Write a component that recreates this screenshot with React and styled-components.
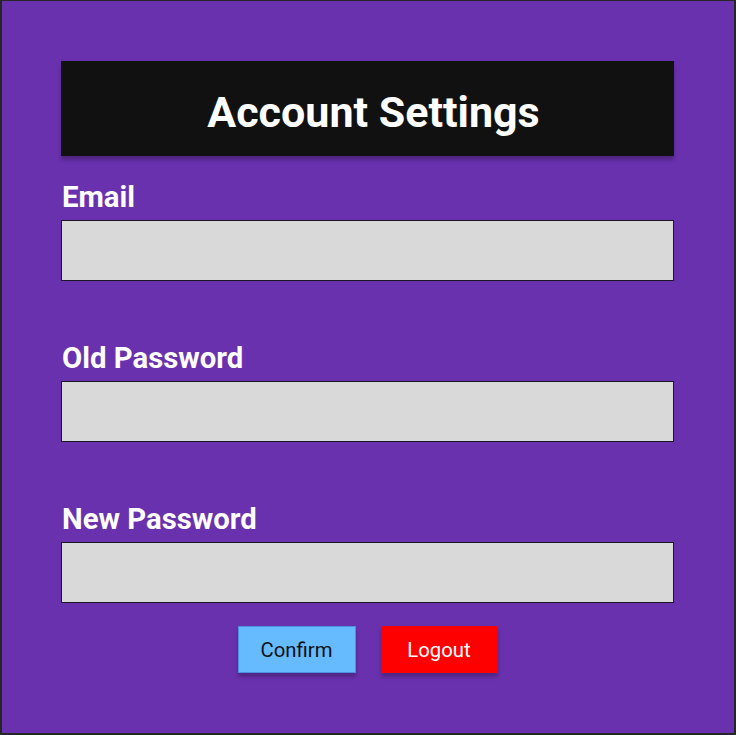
import React from "react";
import styled, { createGlobalStyle } from "styled-components";

const GlobalStyle = createGlobalStyle`
    html, body {
        margin: 0;
        padding: 0;
        background: #2b2b2b;
    }
    * {
        box-sizing: border-box;
    }
`;

const Page = styled.div`
    width: 736px;
    height: 735px;
    background: #6a31ae;
    border: 2px solid #262626;
    border-top-width: 1px;
    padding: 60px 60px 0 59px;
    font-family: Roboto, "Liberation Sans", sans-serif;
    display: flex;
    flex-direction: column;
`;

const Header = styled.div`
    height: 95px;
    padding-top: 8px;
    background: #111111;
    box-shadow: 0 4px 4px rgba(0, 0, 0, 0.25);
    display: flex;
    align-items: center;
    justify-content: center;

    h1 {
        margin: 0 0 0 12px;
        color: #ffffff;
        font-size: 43px;
        font-weight: 700;
        line-height: 1;
    }
`;

const Form = styled.form`
    margin-top: 25px;
    display: flex;
    flex-direction: column;
    gap: 61px;
`;

const Field = styled.div`
    display: flex;
    flex-direction: column;
    gap: 7px;
`;

const Label = styled.label`
    color: #ffffff;
    font-size: 29.3px;
    font-weight: 700;
    line-height: 32px;
    padding-left: 1px;
`;

const Input = styled.input`
    height: 61px;
    width: 100%;
    margin: 0;
    background: #d9d9d9;
    border: 1px solid #1a1626;
    outline: none;
    font-family: inherit;
    font-size: 20px;
    padding: 0 12px;
`;

const Buttons = styled.div`
    margin-top: 23px;
    display: flex;
    justify-content: center;
    gap: 25px;
`;

const Button = styled.button`
    width: ${(p) => p.width}px;
    height: 47px;
    margin: 0;
    border: 1px solid ${(p) => p.edge};
    background: ${(p) => p.bg};
    color: ${(p) => p.fg};
    font-family: inherit;
    font-size: 20.3px;
    font-weight: 400;
    box-shadow: 0 4px 4px rgba(0, 0, 0, 0.25);
    cursor: pointer;
`;

const fields = [
    { id: "email", label: "Email", type: "email" },
    { id: "old", label: "Old Password", type: "password" },
    { id: "new", label: "New Password", type: "password" },
];

export default function App() {
    return (
        <>
            <GlobalStyle />
            <Page>
                <Header>
                    <h1>Account Settings</h1>
                </Header>
                <Form onSubmit={(e) => e.preventDefault()}>
                    {fields.map((f) => (
                        <Field key={f.id}>
                            <Label htmlFor={f.id}>{f.label}</Label>
                            <Input id={f.id} type={f.type} />
                        </Field>
                    ))}
                </Form>
                <Buttons>
                    <Button width={118} bg="#66bbff" fg="#111111" edge="#4d8fe0">
                        Confirm
                    </Button>
                    <Button width={117} bg="#ff0000" fg="#ffffff" edge="#ff0000">
                        Logout
                    </Button>
                </Buttons>
            </Page>
        </>
    );
}
